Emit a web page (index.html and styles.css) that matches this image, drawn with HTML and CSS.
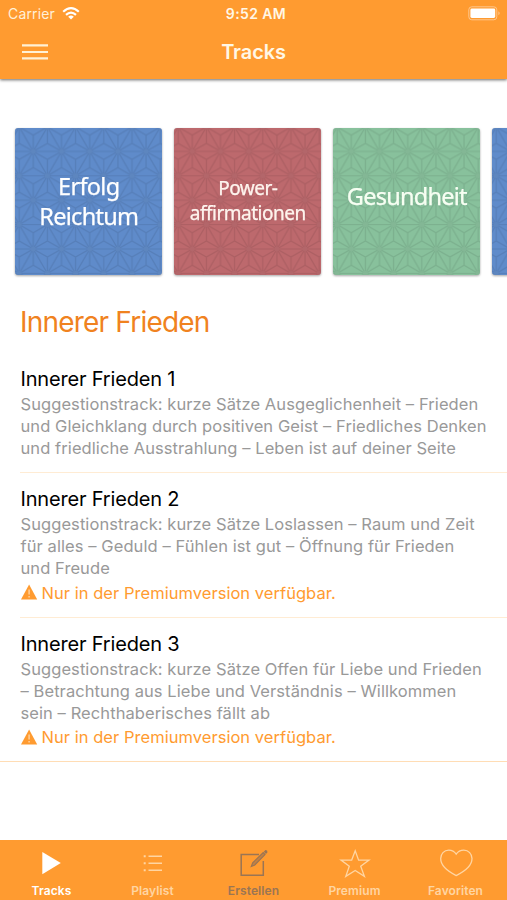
FILE: index.html
```html
<!DOCTYPE html>
<html lang="de">
<head>
<meta charset="utf-8">
<title>Tracks</title>
<link rel="stylesheet" href="styles.css">
</head>
<body>
<svg class="defs" aria-hidden="true">
  <defs>
    <pattern id="asanoha" x="18.3" y="23.4" width="28.2" height="48.8" patternUnits="userSpaceOnUse">
      <g fill="none" stroke="currentColor" stroke-width="1.2">
        <path d="M0 0H28.2M0 24.4H28.2M0 48.8H28.2M0 0L28.2 48.8M28.2 0L0 48.8"/>
        <path d="M14.1 8.1V40.7M0 0V16.3M28.2 0V16.3M0 32.5V48.8M28.2 32.5V48.8"/>
        <path d="M0 0L14.1 8.1L28.2 0M0 16.3L14.1 24.4L28.2 16.3M0 32.5L14.1 24.4L28.2 32.5M0 48.8L14.1 40.7L28.2 48.8"/>
      </g>
      <g class="pattern-eye">
        <circle cx="0" cy="0" r="2.5"/><circle cx="28.2" cy="0" r="2.5"/><circle cx="14.1" cy="24.4" r="2.5"/><circle cx="0" cy="48.8" r="2.5"/><circle cx="28.2" cy="48.8" r="2.5"/>
      </g>
    </pattern>
  </defs>
</svg>
<div class="app">
  <header class="header">
    <div class="status">
      <div class="carrier"><span>Carrier</span>
        <svg width="18" height="13" viewBox="0 0 18 13"><g fill="none" stroke="#fff" stroke-width="2.2"><path d="M1.2 4.7Q9-2.4 16.8 4.7"/><path d="M4 7.9Q9 3.4 14 7.9"/></g><path d="M6.2 9.7Q9 7.4 11.8 9.7L9 12.6Z" fill="#fff"/></svg>
      </div>
      <span class="time">9:52 AM</span>
      <svg class="battery" width="33" height="15" viewBox="0 0 33 15"><rect x=".8" y=".8" width="28" height="13" rx="3" fill="none" stroke="#ffc68b"/><rect x="2.4" y="2.6" width="24.8" height="9.4" rx="1.4" fill="#fff"/><path d="M30.4 5.2Q33 7.2 30.4 9.2Z" fill="#ffc68b"/></svg>
    </div>
    <div class="navbar">
      <svg class="menu" width="26" height="18" viewBox="0 0 26 18"><path d="M0 2.3H26M0 9H26M0 15.4H26" stroke="#fff1d5" stroke-width="2.2"/></svg>
      <h1 class="title">Tracks</h1>
      <span></span>
    </div>
  </header>
  <main class="content">
    <div class="tiles">
      <div class="tile blue"><svg class="texture"><rect width="147" height="147" fill="url(#asanoha)"/></svg><span class="label l-blue">Erfolg<br>Reichtum</span></div>
      <div class="tile red"><svg class="texture"><rect width="147" height="147" fill="url(#asanoha)"/></svg><span class="label l-red">Power-<br>affirmationen</span></div>
      <div class="tile green"><svg class="texture"><rect width="147" height="147" fill="url(#asanoha)"/></svg><span class="label l-green">Gesundheit</span></div>
      <div class="tile blue"><svg class="texture"><rect width="147" height="147" fill="url(#asanoha)"/></svg></div>
    </div>
    <h2 class="section">Innerer Frieden</h2>
    <ul class="tracks">
      <li class="track">
        <h3>Innerer Frieden 1</h3>
        <p>Suggestionstrack: kurze Sätze Ausgeglichenheit – Frieden<br>und Gleichklang durch positiven Geist – Friedliches Denken<br>und friedliche Ausstrahlung – Leben ist auf deiner Seite</p>
      </li>
      <li class="track premium">
        <h3>Innerer Frieden 2</h3>
        <p>Suggestionstrack: kurze Sätze Loslassen – Raum und Zeit<br>für alles – Geduld – Fühlen ist gut – Öffnung für Frieden<br>und Freude</p>
        <div class="notice"><svg width="17" height="16" viewBox="0 0 17 16"><path d="M8.1.6L16.2 15.5H0Z" fill="#ff9b30"/><path d="M8.1 5.5V10.5M8.1 12V13.6" stroke="#ffd09a" stroke-width="1.5"/></svg><span>Nur in der Premiumversion verfügbar.</span></div>
      </li>
      <li class="track premium last">
        <h3>Innerer Frieden 3</h3>
        <p>Suggestionstrack: kurze Sätze Offen für Liebe und Frieden<br>– Betrachtung aus Liebe und Verständnis – Willkommen<br>sein – Rechthaberisches fällt ab</p>
        <div class="notice"><svg width="17" height="16" viewBox="0 0 17 16"><path d="M8.1.6L16.2 15.5H0Z" fill="#ff9b30"/><path d="M8.1 5.5V10.5M8.1 12V13.6" stroke="#ffd09a" stroke-width="1.5"/></svg><span>Nur in der Premiumversion verfügbar.</span></div>
      </li>
    </ul>
  </main>
  <nav class="tabs">
    <a class="tab active"><svg width="36" height="32" viewBox="0 0 36 32"><path d="M8.3 4L26.8 15L8.3 26.3Z" fill="#fff"/></svg><span>Tracks</span></a>
    <a class="tab"><svg width="36" height="32" viewBox="0 0 36 32"><path d="M13.5 8.2H27M13.5 15.2H27M13.5 22.2H27" stroke="currentColor" stroke-width="1.5"/><path d="M8.7 8.2H10.7M8.7 15.2H10.7M8.7 22.2H10.7" stroke="currentColor" stroke-width="2"/></svg><span>Playlist</span></a>
    <a class="tab dark"><svg width="36" height="32" viewBox="0 0 36 32"><path d="M23 6.5H5.2V27.3H27.3V13" fill="none" stroke="currentColor" stroke-width="1.5"/><path d="M15.3 18.5L16.7 14.8L27.2 4.6L29 6.6L18.8 17Z" fill="#c38143" stroke="currentColor" stroke-width="1.2"/><path d="M27.8 3.7L29.4 2.1Q31.6 2.2 31.5 4.2L30 5.9Z" fill="currentColor"/></svg><span>Erstellen</span></a>
    <a class="tab"><svg width="36" height="32" viewBox="0 0 36 32"><path d="M18.2 2.8L21.6 12.1H32L23.7 18.3L27.4 28.4L18.2 22.4L8.8 28.4L12.3 18.3L4 12.1H14.7Z" fill="none" stroke="currentColor" stroke-width="1.3"/></svg><span>Premium</span></a>
    <a class="tab"><svg width="36" height="32" viewBox="0 0 36 32"><path d="M18.2 6.2C16.2 3.2 13.5 2.2 10.8 2.2C6 2.2 2.7 5.8 2.7 10.6C2.7 17.8 10.5 23.8 18.2 27.6C26 23.8 34 17.8 34 10.6C34 5.8 30.5 2.2 25.8 2.2C23 2.2 20.2 3.2 18.2 6.2Z" fill="none" stroke="currentColor" stroke-width="1.3"/></svg><span>Favoriten</span></a>
  </nav>
</div>
</body>
</html>
```
FILE: styles.css
```css
* { box-sizing: border-box; }
body { margin: 0; background: #fff; font-family: Inter, "Liberation Sans", sans-serif; }
h1, h2, h3, p, ul { margin: 0; padding: 0; font-weight: 400; }
svg { display: block; flex: none; }
.defs { position: absolute; width: 0; height: 0; }
.app { width: 507px; height: 900px; display: flex; flex-direction: column; overflow: hidden; }

.header { height: 79px; background: #ff9b30; box-shadow: 0 1px 3px rgba(0, 0, 0, .6); color: #fff7e6; }
.status { height: 27px; display: grid; grid-template-columns: 1fr auto 1fr; align-items: center; padding: 0 6px 0 8px; }
.carrier { display: flex; align-items: center; gap: 7px; font-size: 14px; letter-spacing: .15px; color: #fff0d8; }
.time { font-size: 14px; font-weight: 600; letter-spacing: .4px; margin-left: 3px; }
.battery { justify-self: end; }
.navbar { height: 50px; display: grid; grid-template-columns: 1fr auto 1fr; align-items: center; padding: 0 22px; }
.title { font-size: 20px; font-weight: 600; letter-spacing: -.1px; }

.content { flex: 1; padding-top: 48.5px; }
.tiles { display: flex; gap: 12.2px; padding-left: 15.4px; }
.tile { position: relative; flex: none; width: 146.8px; height: 147px; border-radius: 3px; overflow: hidden; display: flex; align-items: center; justify-content: center; filter: drop-shadow(0 1px 1px rgba(0, 0, 0, .35)); }
.blue { background: #5f8bca; }
.red { background: #bd696d; }
.green { background: #88c19c; }
.texture { position: absolute; inset: 0; width: 147px; height: 147px; color: #000; opacity: .085; }
.pattern-eye { fill: #555; }
.label { position: relative; color: #fff; text-align: center; white-space: nowrap; font-family: "Noto Sans", "Open Sans", sans-serif; -webkit-text-stroke: .25px #fff; }
.l-blue { font-size: 23.5px; line-height: 30px; letter-spacing: -.7px; }
.l-red { font-size: 19px; line-height: 25px; letter-spacing: -.5px; color: #fff3ea; }
.l-green { font-size: 23.5px; line-height: 30px; letter-spacing: -.75px; top: -5px; color: #f6fff0; }

.section { margin: 29.5px 0 0 20px; font-size: 28px; line-height: 36px; letter-spacing: -.8px; color: #f08220; }
.tracks { list-style: none; margin-top: 20px; }
.track { height: 113px; margin-left: 20px; padding: 5px 0 0 .5px; border-bottom: 1px solid #ffecd4; white-space: nowrap; }
.track.premium { height: 144.5px; padding-top: 12px; }
.track.last { margin-left: 0; padding-left: 20.5px; border-color: #ffddb5; }
.track h3 { font-size: 20px; line-height: 28px; margin-bottom: -1px; letter-spacing: -.17px; color: #000; }
.track p { position: relative; top: 1px; font-size: 16.5px; line-height: 22px; letter-spacing: .08px; color: #999; }
.notice { display: flex; align-items: center; gap: 4px; height: 28px; font-size: 16.5px; letter-spacing: .04px; color: #ff9b30; }
.notice span { position: relative; top: .5px; }

.tabs { flex: none; height: 60px; background: #ff9b30; display: grid; grid-template-columns: repeat(5, 101px); justify-content: center; color: #ffd5a2; }
.tab { display: flex; flex-direction: column; align-items: center; padding-top: 8px; font-size: 12px; font-weight: 600; line-height: 16px; gap: 3px; letter-spacing: .1px; }
.tab.active { color: #fff; }
.tab.dark { color: #9a7554; }
```
